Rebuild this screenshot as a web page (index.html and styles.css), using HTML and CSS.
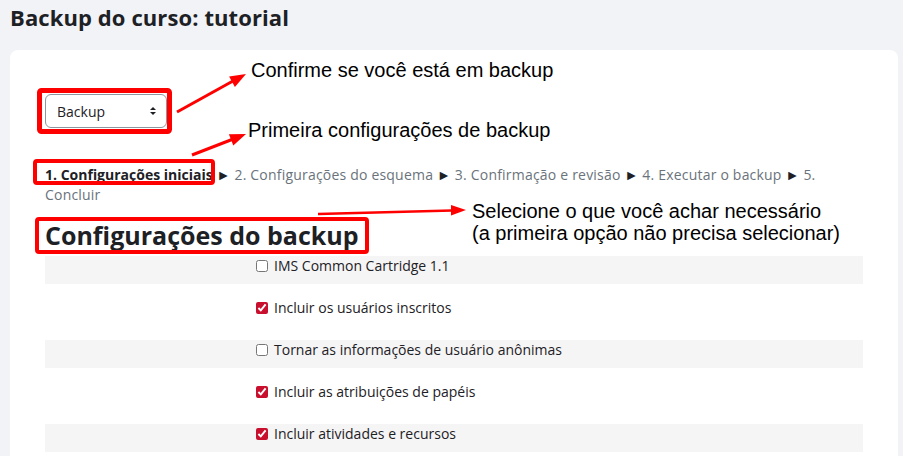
FILE: index.html
```html
<!DOCTYPE html>
<html lang="pt-BR">
<head>
    <meta charset="UTF-8">
    <title>Backup do curso: tutorial</title>

    <link rel="stylesheet" href="styles.css">
</head>
<body>
<h1 class="page-title">Backup do curso: tutorial</h1>

<div class="card">
    <div class="select-wrap">
        <select class="custom-select">
            <option>Backup</option>
        </select>
        <svg class="select-arrows" width="8" height="10" viewBox="0 0 8 10">
            <path d="M4 1 L7 4 L1 4 Z" fill="#1d2125"/>
            <path d="M4 9 L7 6 L1 6 Z" fill="#1d2125"/>
        </svg>
    </div>

    <div class="progress-bar">
        <span class="step current">1. Configurações iniciais</span>
        <span class="sep">►</span>
        <span class="step">2. Configurações do esquema</span>
        <span class="sep">►</span>
        <span class="step">3. Confirmação e revisão</span>
        <span class="sep">►</span>
        <span class="step">4. Executar o backup</span>
        <span class="sep">►</span>
        <span class="step">5. Concluir</span>
    </div>

    <h2 class="section-title">Configurações do backup</h2>

    <div class="fitem odd">
        <label><input type="checkbox"> IMS Common Cartridge 1.1</label>
    </div>
    <div class="fitem">
        <label><input type="checkbox" checked> Incluir os usuários inscritos</label>
    </div>
    <div class="fitem odd">
        <label><input type="checkbox"> Tornar as informações de usuário anônimas</label>
    </div>
    <div class="fitem">
        <label><input type="checkbox" checked> Incluir as atribuições de papéis</label>
    </div>
    <div class="fitem odd">
        <label><input type="checkbox" checked> Incluir atividades e recursos</label>
    </div>
</div>

<!-- anotações do tutorial desenhadas por cima da tela -->
<div class="annotations">
    <svg class="marks" width="903" height="456" viewBox="0 0 903 456">
        <g fill="none" stroke="#ff0000">
            <rect x="39.5" y="90.5" width="130" height="41" rx="2" stroke-width="5"/>
            <rect x="35" y="161" width="178" height="22" rx="2" stroke-width="4"/>
            <rect x="37" y="219" width="330" height="33" rx="2" stroke-width="4"/>
            <line x1="177" y1="112" x2="233" y2="81" stroke-width="3"/>
            <line x1="192" y1="155" x2="232" y2="139.5" stroke-width="3"/>
            <line x1="318" y1="214" x2="452" y2="210.4" stroke-width="2.5"/>
        </g>
        <g fill="#ff0000">
            <polygon points="246,74 229.1,76.4 234.9,87"/>
            <polygon points="246,134 228.9,134.2 233.3,145.4"/>
            <polygon points="466,210 451,205 451,215.5"/>
        </g>
    </svg>
    <div class="note note-1">Confirme se você está em backup</div>
    <div class="note note-2">Primeira configurações de backup</div>
    <div class="note note-3">Selecione o que você achar necessário<br>(a primeira opção não precisa selecionar)</div>
</div>
</body>
</html>
```

FILE: styles.css
```css
* {
    margin: 0;
    padding: 0;
    box-sizing: border-box;
}

body {
    position: relative;
    width: 903px;
    height: 456px;
    overflow: hidden;
    background-color: #f1f3f7;
    font-family: "Open Sans", "Noto Sans", sans-serif;
    color: #1d2125;
}

.page-title {
    padding: 2px 10px 0;
    font-size: 22px;
    line-height: 30px;
    font-weight: 700;
    letter-spacing: 0.1px;
}

.card {
    margin: 18px 5px 0 10px;
    padding: 44px 35px 0;
    height: 420px;
    background-color: #fff;
    border-radius: 8px;
}

.select-wrap {
    position: relative;
    width: 122px;
    height: 34px;
}

.custom-select {
    -webkit-appearance: none;
    appearance: none;
    width: 100%;
    height: 100%;
    padding: 0 24px 0 11px;
    border: 1px solid #8f959e;
    border-radius: 6px;
    background-color: #fff;
    font-family: inherit;
    font-size: 14px;
    color: #1d2125;
}

.select-arrows {
    position: absolute;
    top: 12px;
    right: 10px;
}

.progress-bar {
    margin-top: 37px;
    font-size: 14px;
    line-height: 20px;
    letter-spacing: 0.2px;
    color: #6a737b;
}

.progress-bar .current {
    font-weight: 700;
    color: #1d2125;
    letter-spacing: 0;
}

.progress-bar .sep {
    color: #1d2125;
}

.section-title {
    margin-top: 15px;
    font-size: 25px;
    line-height: 30px;
    font-weight: 700;
}

.fitem {
    height: 28px;
    margin-top: 14px;
    padding-left: 211px;
    font-size: 14px;
    line-height: 20px;
}

.section-title + .fitem {
    margin-top: 6px;
}

.fitem.odd {
    background-color: #f5f5f5;
}

.fitem label {
    display: flex;
    align-items: center;
    gap: 6px;
}

.fitem input {
    width: 12px;
    height: 12px;
    margin: 0;
    accent-color: #c8102e;
}

.annotations {
    position: absolute;
    top: 0;
    left: 0;
    width: 903px;
    height: 456px;
    pointer-events: none;
}

.marks {
    position: absolute;
    top: 0;
    left: 0;
}

.note {
    position: absolute;
    font-family: "Liberation Sans", Arial, sans-serif;
    font-size: 20px;
    line-height: 22px;
    color: #000;
    white-space: nowrap;
}

.note-1 {
    top: 59px;
    left: 251px;
}

.note-2 {
    top: 119px;
    left: 248px;
}

.note-3 {
    top: 200px;
    left: 472px;
}
```
